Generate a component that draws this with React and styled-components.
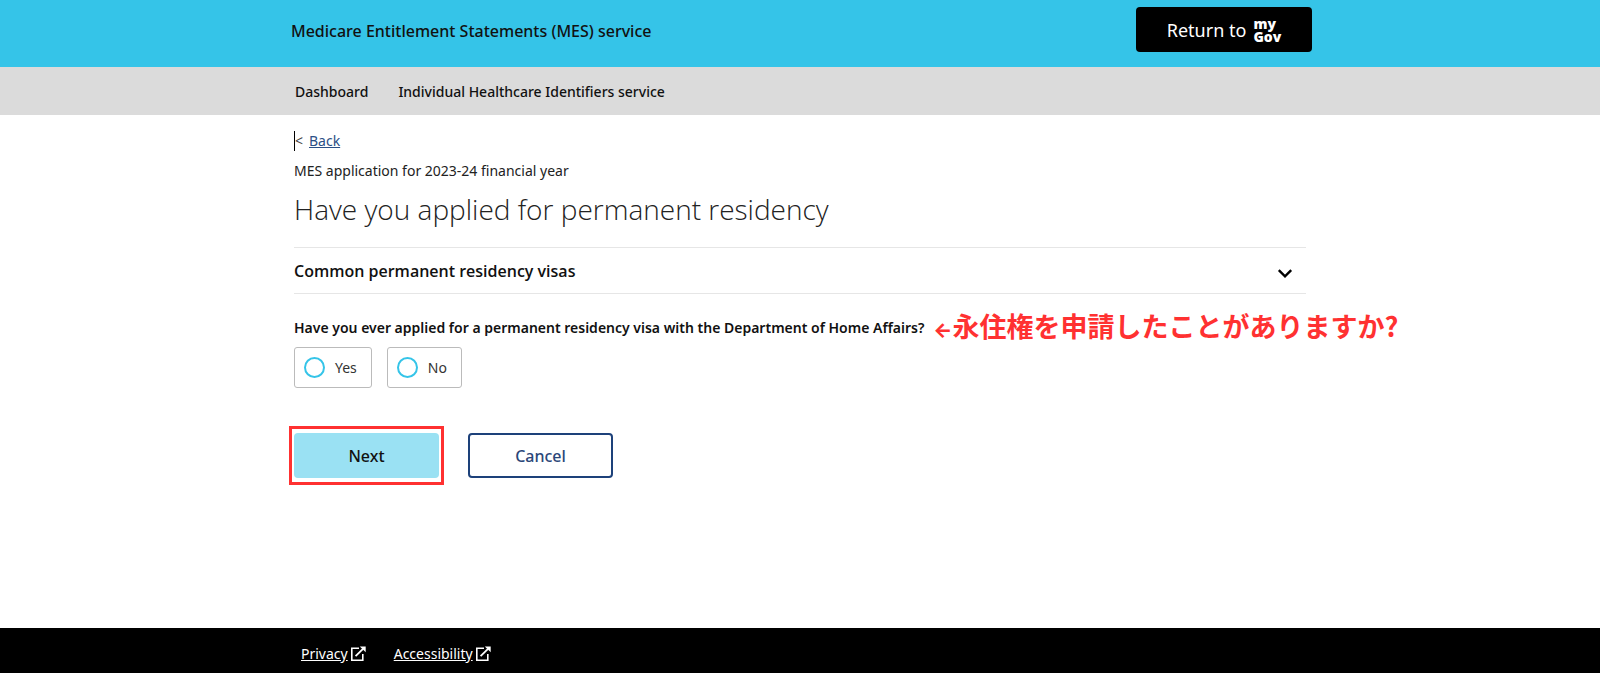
import React, { useState } from "react";
import styled, { createGlobalStyle } from "styled-components";

const GlobalStyle = createGlobalStyle`
  * {
    box-sizing: border-box;
  }

  body {
    margin: 0;
    background: #fff;
    color: #222;
    font-family: "Noto Sans", "Open Sans", sans-serif;
    font-size: 14px;
    line-height: 20px;
  }

  button {
    font-family: inherit;
  }
`;

const Page = styled.div`
  display: flex;
  flex-direction: column;
  min-height: 100vh;
`;

const Container = styled.div`
  width: 100%;
  max-width: 1060px;
  margin: 0 auto;
  padding: 0 24px;
`;

const Header = styled.header`
  background: #35c4e8;
`;

const HeaderRow = styled(Container)`
  display: flex;
  align-items: flex-start;
  justify-content: space-between;
  padding: 7px 18px 12px 21px;
`;

const ServiceName = styled.span`
  color: #111;
  font-size: 16px;
  font-weight: 500;
  line-height: 48px;
`;

const ReturnButton = styled.button`
  display: flex;
  align-items: center;
  justify-content: center;
  gap: 7px;
  width: 176px;
  height: 45px;
  border: none;
  border-radius: 4px;
  background: #000;
  color: #fff;
  font-size: 18px;
  cursor: pointer;
`;

const MyGovLogo = styled.span`
  display: flex;
  flex-direction: column;
  font-family: "Open Sans", sans-serif;
  font-size: 14px;
  font-weight: 800;
  line-height: 13px;
  text-align: left;
`;

const Nav = styled.nav`
  background: #dbdbdb;
`;

const NavRow = styled(Container)`
  display: flex;
  gap: 30px;
  padding: 15px 25px 13px;
`;

const NavLink = styled.a`
  color: #111;
  font-weight: 500;
  text-decoration: none;
`;

const Main = styled(Container).attrs({ as: "main" })`
  flex: 1;
  padding-top: 16px;
`;

const BackRow = styled.div`
  display: flex;
  gap: 6px;
  color: #444;
`;

const Caret = styled.span`
  border-left: 1px solid #000;
`;

const BackLink = styled.a`
  color: #2b4f86;
`;

const Subtitle = styled.p`
  margin: 10px 0 0;
`;

const Title = styled.h1`
  margin: 8px 0 18px;
  color: #222;
  font-family: "Open Sans", sans-serif;
  font-size: 28px;
  font-weight: 300;
  line-height: 40px;
`;

const Accordion = styled.button`
  display: flex;
  align-items: center;
  justify-content: space-between;
  width: 100%;
  height: 47px;
  padding: 0 13px 0 0;
  border: solid #e6e6e6;
  border-width: 1px 0;
  background: none;
  color: #111;
  font-family: "Open Sans", sans-serif;
  font-size: 16px;
  font-weight: 600;
  cursor: pointer;

  svg {
    margin-top: 4px;
  }
`;

const Fieldset = styled.fieldset`
  margin: 22px 0 0;
  padding: 0;
  border: none;
`;

const Legend = styled.legend`
  display: flex;
  align-items: center;
  padding: 0;
  color: #111;
  font-weight: 600;
  white-space: nowrap;
`;

const Note = styled.span`
  margin-left: 9px;
  color: #ff3131;
  font-family: "Noto Sans CJK JP", sans-serif;
  font-size: 27px;
  font-weight: 700;
  line-height: 20px;
`;

const Arrow = styled.span`
  font-family: Inter, sans-serif;
  font-size: 20px;
  font-weight: 800;
`;

const Options = styled.div`
  display: flex;
  gap: 15px;
  padding-top: 7px;
`;

const Option = styled.label`
  display: flex;
  align-items: center;
  gap: 10px;
  height: 41px;
  padding: 0 14px 0 9px;
  border: 1px solid #bbb;
  border-radius: 3px;
  color: #333;
  cursor: pointer;
`;

const Radio = styled.input`
  appearance: none;
  width: 21px;
  height: 21px;
  margin: 0;
  border: 2px solid #35c4e8;
  border-radius: 50%;

  &:checked {
    background: #35c4e8;
    box-shadow: inset 0 0 0 3px #fff;
  }
`;

const Actions = styled.div`
  display: flex;
  align-items: center;
  gap: 24px;
  margin: 38px 0 0 -5px;
`;

const Highlight = styled.div`
  padding: 4px 2px;
  border: 3px solid #ff3131;
`;

const Button = styled.button`
  display: block;
  width: 145px;
  height: 45px;
  border: ${({ $primary }) => ($primary ? "none" : "2px solid #1d417a")};
  border-radius: 4px;
  background: ${({ $primary }) => ($primary ? "#9ae1f3" : "#fff")};
  color: ${({ $primary }) => ($primary ? "#111" : "#2b4779")};
  font-size: 16px;
  font-weight: 500;
  cursor: pointer;
`;

const Footer = styled.footer`
  background: #000;
`;

const FooterRow = styled(Container)`
  display: flex;
  gap: 28px;
  padding: 16px 31px 9px;
`;

const FooterLink = styled.a`
  display: flex;
  align-items: center;
  gap: 2px;
  color: #fff;
`;

const ChevronIcon = () => (
  <svg width="16" height="12" viewBox="0 0 16 12" fill="none" stroke="#000" strokeWidth="2.4">
    <path d="M1.8 3.2 8 9.4l6.2-6.2" />
  </svg>
);

const ExternalIcon = () => (
  <svg width="16" height="16" viewBox="0 0 16 16" fill="none" stroke="#fff">
    <path strokeWidth="1.6" d="M9 2.3H1.8v11.9h11V8" />
    <path strokeWidth="1.8" d="M5.6 10.2 13 2.8" />
    <path fill="#fff" stroke="none" d="M9.8.4h5.9v5.9z" />
  </svg>
);

const App = () => {
  const [answer, setAnswer] = useState("");

  return (
    <Page>
      <GlobalStyle />
      <Header>
        <HeaderRow>
          <ServiceName>Medicare Entitlement Statements (MES) service</ServiceName>
          <ReturnButton type="button">
            Return to
            <MyGovLogo>
              <span>my</span>
              <span>Gov</span>
            </MyGovLogo>
          </ReturnButton>
        </HeaderRow>
      </Header>
      <Nav>
        <NavRow>
          <NavLink href="#dashboard">Dashboard</NavLink>
          <NavLink href="#identifiers">Individual Healthcare Identifiers service</NavLink>
        </NavRow>
      </Nav>
      <Main>
        <BackRow>
          <Caret>&lt;</Caret>
          <BackLink href="#back">Back</BackLink>
        </BackRow>
        <Subtitle>MES application for 2023-24 financial year</Subtitle>
        <Title>Have you applied for permanent residency</Title>
        <Accordion type="button" aria-expanded="false">
          Common permanent residency visas
          <ChevronIcon />
        </Accordion>
        <Fieldset>
          <Legend>
            Have you ever applied for a permanent residency visa with the Department of Home Affairs?
            <Note lang="ja">
              <Arrow>←</Arrow>
              永住権を申請したことがありますか?
            </Note>
          </Legend>
          <Options>
            {["Yes", "No"].map((label) => (
              <Option key={label}>
                <Radio
                  type="radio"
                  name="applied"
                  value={label}
                  checked={answer === label}
                  onChange={(e) => setAnswer(e.target.value)}
                />
                {label}
              </Option>
            ))}
          </Options>
        </Fieldset>
        <Actions>
          <Highlight>
            <Button type="button" $primary>Next</Button>
          </Highlight>
          <Button type="button">Cancel</Button>
        </Actions>
      </Main>
      <Footer>
        <FooterRow>
          <FooterLink href="#privacy">
            Privacy
            <ExternalIcon />
          </FooterLink>
          <FooterLink href="#accessibility">
            Accessibility
            <ExternalIcon />
          </FooterLink>
        </FooterRow>
      </Footer>
    </Page>
  );
};

export default App;
